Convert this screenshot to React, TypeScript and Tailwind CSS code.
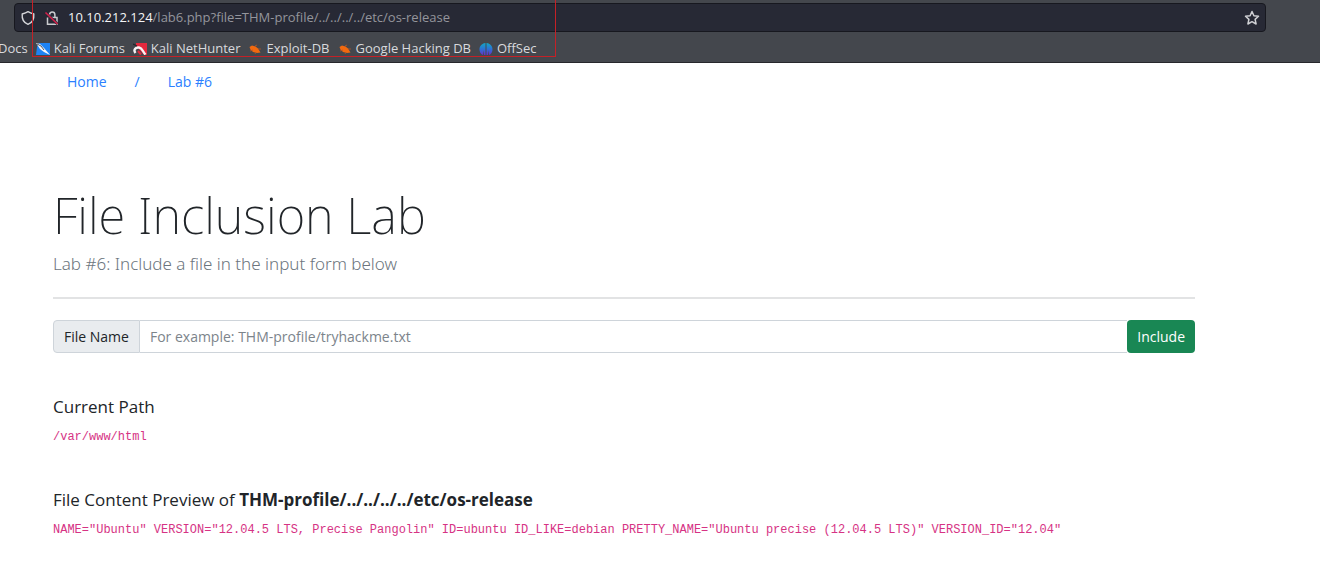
import type { ReactNode } from "react";

function ShieldIcon() {
  return (
    <svg className="size-4 shrink-0" viewBox="0 0 16 16" fill="none" stroke="#d5d6da" strokeWidth="1.4" strokeLinejoin="round" aria-hidden="true">
      <path d="M8 1.600C6.200 2.700 4.500 3.300 2.200 4C1.800 8.500 3.400 12.600 8 14.400C12.600 12.600 14.200 8.500 13.800 4C11.500 3.300 9.800 2.700 8 1.600Z" />
    </svg>
  );
}

function InsecureLockIcon() {
  return (
    <svg className="size-4 shrink-0" viewBox="0 0 16 16" fill="none" aria-hidden="true">
      <g stroke="#c9cace" strokeWidth="1.500">
        <path d="M5.500 7.500V4.800A2.700 2.700 0 0 1 10.900 4.800V7.500" />
        <path d="M3.500 7.500V14.300H13V7.500H7" />
      </g>
      <path d="M1.500 2.500L13.500 14" stroke="#272935" strokeWidth="2.600" />
      <path d="M1.500 2.500L13.500 14" stroke="#d0204a" strokeWidth="1.700" />
    </svg>
  );
}

function StarIcon() {
  return (
    <svg className="size-4" viewBox="0 0 16 16" fill="none" stroke="#d0d1d5" strokeWidth="1.500" strokeLinejoin="round" aria-hidden="true">
      <path d="M8 1.500L9.900 5.800L14.500 6.300L11.100 9.400L12.100 14L8 11.700L3.900 14L4.900 9.400L1.500 6.300L6.100 5.800Z" />
    </svg>
  );
}

function ForumsIcon() {
  return (
    <svg className="h-3 w-3.5 shrink-0" viewBox="0 0 14 12" aria-hidden="true">
      <path d="M3 0H14V12H0L1 4Z" fill="#1e83f4" />
      <path d="M0 0L4 1L8 5L14 12L8 9L4 6Z" fill="#f7f8fa" />
      <path d="M1 1L5 3L8 7" fill="none" stroke="#394354" strokeWidth="0.900" />
    </svg>
  );
}

function NetHunterIcon() {
  return (
    <svg className="h-3 w-3.5 shrink-0" viewBox="0 0 14 12" aria-hidden="true">
      <path d="M3 0H14V12H11L3 3Z" fill="#e5283d" />
      <path d="M2.500 10C0 7 2.500 4 6 4.500C9.500 5 9.500 8.500 12.500 11.500" fill="none" stroke="#f6f3f4" strokeWidth="2.400" />
      <path d="M5 8L8 11.500" stroke="#e5283d" strokeWidth="2" />
      <path d="M0 1L4 3" stroke="#24262c" strokeWidth="1.200" />
    </svg>
  );
}

function BugIcon() {
  return (
    <svg className="h-3 w-3.5 shrink-0" viewBox="0 0 14 12" aria-hidden="true">
      <path d="M1.500 4L4 2.500L7.500 3.500L10 5.500L12.500 9.500L9 10L5 9L2.500 6.500Z" fill="#f1690f" />
      <path d="M2 8L5 7M7 3L9 2M10 6L13 6M8 9L7 11" stroke="#b65425" strokeWidth="0.800" />
    </svg>
  );
}

function OffSecIcon() {
  return (
    <svg className="h-3.5 w-3.5 shrink-0" viewBox="0 0 14 14" aria-hidden="true">
      <defs>
        <linearGradient id="offsec" x1="0" y1="0" x2="0" y2="1">
          <stop offset="0" stopColor="#12a8c4" />
          <stop offset="0.500" stopColor="#2b72d5" />
          <stop offset="1" stopColor="#6630c8" />
        </linearGradient>
      </defs>
      <path d="M6.500 1C2 1.500 0 5 .6 8.500C1 11 2.500 12.500 4 13L4.500 8L5 13H6.500ZM7.500 1C12 1.500 14 5 13.400 8.500C13 11 11.500 12.500 10 13L9.500 8L9 13H7.500Z" fill="url(#offsec)" />
    </svg>
  );
}

function Bookmark({ icon, children }: { icon?: ReactNode; children: ReactNode }) {
  return (
    <a href="#" className="flex items-center gap-1 whitespace-nowrap">
      {icon}
      <span>{children}</span>
    </a>
  );
}

function BrowserBar() {
  return (
    <header className="relative h-[63px] border-b border-[#27272c] bg-[#44474d] pt-[3px] text-[13px] text-[#d9dadd]">
      <div className="mr-[54px] ml-3.5 flex h-[29px] items-center rounded-sm border border-[#17181f] bg-[#272935] pr-[5px] pl-[5px]">
        <ShieldIcon />
        <span className="ml-2 flex">
          <InsecureLockIcon />
        </span>
        <p className="ml-2 flex-1 text-[#94959c]">
          <span className="text-[#f4f4f6]">10.10.212.124</span>/lab6.php?file=THM-profile/../../../../etc/os-release
        </p>
        <button type="button" aria-label="Bookmark this page">
          <StarIcon />
        </button>
      </div>
      <nav aria-label="Bookmarks" className="-ml-0.5 flex h-[34px] items-center gap-2">
        <Bookmark>Docs</Bookmark>
        <Bookmark icon={<ForumsIcon />}>Kali Forums</Bookmark>
        <Bookmark icon={<NetHunterIcon />}>Kali NetHunter</Bookmark>
        <Bookmark icon={<BugIcon />}>Exploit-DB</Bookmark>
        <Bookmark icon={<BugIcon />}>Google Hacking DB</Bookmark>
        <Bookmark icon={<OffSecIcon />}>OffSec</Bookmark>
      </nav>
      <div className="pointer-events-none absolute top-0 left-8 h-[57px] w-[524px] border-x border-b border-[#c42127]" />
    </header>
  );
}

export default function App() {
  return (
    <div className="min-h-screen bg-white font-['Open_Sans','Noto_Sans',sans-serif] text-[#212529]">
      <BrowserBar />
      <main className="pr-[125px] pb-8 pl-[53px]">
        <nav aria-label="Breadcrumb" className="flex h-9 items-center gap-7 pt-0.5 pl-3.5 text-sm text-[#2b7fff]">
          <a href="#">Home</a>
          <span>/</span>
          <a href="#">Lab #6</a>
        </nav>
        <h1 className="mt-[84px] font-['Noto_Sans',sans-serif] text-[49px] leading-[64px] font-extralight">File Inclusion Lab</h1>
        <p className="mt-[3px] font-['Noto_Sans',sans-serif] text-[17px] leading-7 font-light text-[#6c757d]">
          Lab #6: Include a file in the input form below
        </p>
        <hr className="mt-[19px] border-t-2 border-[#e2e3e4]" />
        <form className="mt-[21px] flex h-[33px] text-sm" onSubmit={(e) => e.preventDefault()}>
          <label htmlFor="file" className="flex items-center rounded-l-sm border border-[#ced4da] bg-[#e9ecef] px-2.5">
            File Name
          </label>
          <input
            id="file"
            name="file"
            type="text"
            placeholder="For example: THM-profile/tryhackme.txt"
            className="min-w-0 flex-1 border-y border-[#ced4da] px-2.5 placeholder:text-[#7c848b]"
          />
          <button type="submit" className="rounded-sm bg-[#198754] px-2.5 text-white">
            Include
          </button>
        </form>
        <section className="mt-10">
          <h2 className="text-[17px] leading-7">Current Path</h2>
          <code className="mt-1.5 block font-['Liberation_Mono',monospace] text-[12px] leading-5 text-[#d63384]">/var/www/html</code>
        </section>
        <section className="mt-[39px]">
          <h2 className="text-[17px] leading-7">
            File Content Preview of <b>THM-profile/../../../../etc/os-release</b>
          </h2>
          <code className="mt-1.5 block font-['Liberation_Mono',monospace] text-[12px] leading-5 text-[#d63384]">
            NAME="Ubuntu" VERSION="12.04.5 LTS, Precise Pangolin" ID=ubuntu ID_LIKE=debian PRETTY_NAME="Ubuntu precise (12.04.5 LTS)" VERSION_ID="12.04"
          </code>
        </section>
      </main>
    </div>
  );
}
